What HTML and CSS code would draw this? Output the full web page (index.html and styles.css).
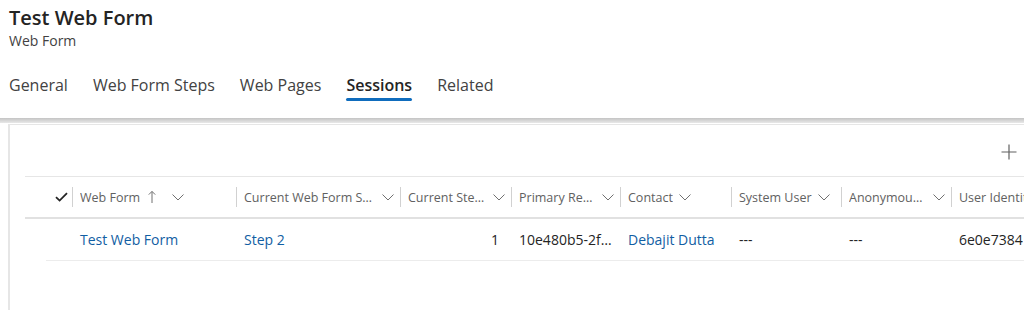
FILE: index.html
```html
<!DOCTYPE html>
<html lang="en">
<head>
    <meta charset="UTF-8">
    <meta name="viewport" content="width=device-width, initial-scale=1.0">
    <title>Test Web Form</title>
    <link rel="stylesheet" href="styles.css">
</head>
<body>
    <div class="record-header">
        <h1 class="record-title">Test Web Form</h1>
        <div class="record-type">Web Form</div>
        <ul class="tabs">
            <li class="tab">General</li>
            <li class="tab">Web Form Steps</li>
            <li class="tab">Web Pages</li>
            <li class="tab active">Sessions</li>
            <li class="tab">Related</li>
        </ul>
    </div>
    <div class="divider-bar"></div>

    <div class="panel">
        <div class="toolbar">
            <button class="add-btn" title="New">
                <svg width="16" height="16" viewBox="0 0 16 16"><path d="M8 0.5v15M0.5 8h15" stroke="#616161" stroke-width="1.2" fill="none"/></svg>
            </button>
        </div>

        <div class="grid">
            <div class="grid-header">
                <div class="cell check-cell">
                    <svg width="13" height="10" viewBox="0 0 13 10"><path d="M1 5.2l3.6 3.4L12 1.2" stroke="#242424" stroke-width="1.8" fill="none"/></svg>
                </div>
                <div class="cell col-1">
                    <span class="head-text">Web Form</span>
                    <svg class="sort-icon" width="8" height="14" viewBox="0 0 8 14"><path d="M4 13V1.5M0.8 4.6L4 1.4l3.2 3.2" stroke="#707070" stroke-width="1" fill="none"/></svg>
                    <svg class="chevron wide" width="12" height="7" viewBox="0 0 12 7"><path d="M0.5 0.5L6 6l5.5-5.5" stroke="#707070" stroke-width="1" fill="none"/></svg>
                </div>
                <div class="cell col-2">
                    <span class="head-text">Current Web Form Step</span>
                    <svg class="chevron" width="12" height="7" viewBox="0 0 12 7"><path d="M0.5 0.5L6 6l5.5-5.5" stroke="#707070" stroke-width="1" fill="none"/></svg>
                </div>
                <div class="cell col-3">
                    <span class="head-text">Current Step Index</span>
                    <svg class="chevron" width="12" height="7" viewBox="0 0 12 7"><path d="M0.5 0.5L6 6l5.5-5.5" stroke="#707070" stroke-width="1" fill="none"/></svg>
                </div>
                <div class="cell col-4">
                    <span class="head-text">Primary Record ID</span>
                    <svg class="chevron" width="12" height="7" viewBox="0 0 12 7"><path d="M0.5 0.5L6 6l5.5-5.5" stroke="#707070" stroke-width="1" fill="none"/></svg>
                </div>
                <div class="cell col-5">
                    <span class="head-text">Contact</span>
                    <svg class="chevron" width="12" height="7" viewBox="0 0 12 7"><path d="M0.5 0.5L6 6l5.5-5.5" stroke="#707070" stroke-width="1" fill="none"/></svg>
                </div>
                <div class="cell col-6">
                    <span class="head-text">System User</span>
                    <svg class="chevron" width="12" height="7" viewBox="0 0 12 7"><path d="M0.5 0.5L6 6l5.5-5.5" stroke="#707070" stroke-width="1" fill="none"/></svg>
                </div>
                <div class="cell col-7">
                    <span class="head-text">Anonymous Identification</span>
                    <svg class="chevron" width="12" height="7" viewBox="0 0 12 7"><path d="M0.5 0.5L6 6l5.5-5.5" stroke="#707070" stroke-width="1" fill="none"/></svg>
                </div>
                <div class="cell col-8">
                    <span class="head-text clip">User Identity Name</span>
                </div>
            </div>

            <div class="grid-row">
                <div class="cell check-cell"></div>
                <div class="cell col-1"><a class="link">Test Web Form</a></div>
                <div class="cell col-2"><a class="link">Step 2</a></div>
                <div class="cell col-3 num">1</div>
                <div class="cell col-4"><span class="ellipsis">10e480b5-2f1c-ee11-8f6d-000d3a5c1b2e</span></div>
                <div class="cell col-5"><a class="link">Debajit Dutta</a></div>
                <div class="cell col-6">---</div>
                <div class="cell col-7">---</div>
                <div class="cell col-8"><span class="clip">6e0e7384</span></div>
            </div>
        </div>
    </div>
</body>
</html>
```

FILE: styles.css
```css
body {
    margin: 0;
    font-family: "Segoe UI", "Open Sans", sans-serif;
    background-color: #fff;
    color: #242424;
    overflow: hidden;
    height: 310px;
}

.record-header {
    padding: 4px 0 0 9px;
}

.record-title {
    margin: 0;
    font-size: 20px;
    font-weight: 600;
    line-height: 28px;
    color: #242424;
}

.record-type {
    font-size: 14px;
    line-height: 18px;
    color: #424242;
}

.tabs {
    list-style: none;
    margin: 20px 0 0;
    padding: 0;
    display: flex;
    gap: 25px;
}

.tab {
    position: relative;
    font-size: 16px;
    line-height: 22px;
    padding: 4px 0 22px;
    color: #424242;
}

.tab.active {
    font-weight: 600;
    color: #242424;
}

.tab.active::after {
    content: "";
    position: absolute;
    left: 0;
    right: 0;
    bottom: 17px;
    height: 3px;
    border-radius: 2px;
    background-color: #0f6cbd;
}

.divider-bar {
    height: 5px;
    background: linear-gradient(#c4c4c4, #e8e8e8);
}

.panel {
    margin: 1px 0 0 8px;
    border-left: 2px solid #e6e6e6;
    border-top: 1px solid #e6e6e6;
    height: 200px;
    padding-left: 15px;
}

.toolbar {
    display: flex;
    justify-content: flex-end;
    height: 51px;
}

.add-btn {
    background: none;
    border: none;
    padding: 0;
    margin: 19px 7px 0 0;
    width: 16px;
    height: 16px;
    display: flex;
}

.grid {
    font-size: 14px;
}

.grid-header {
    display: flex;
    height: 40px;
    border-top: 1px solid #e6e6e6;
    border-bottom: 2px solid #e1e1e1;
    color: #616161;
    font-size: 12.5px;
}

.grid-row {
    display: flex;
    height: 41px;
    margin-left: 21px;
    border-bottom: 1px solid #ececec;
    color: #242424;
}

.cell {
    display: flex;
    align-items: center;
    padding: 0 8px;
    box-sizing: border-box;
    flex-shrink: 0;
    min-width: 0;
    white-space: nowrap;
    overflow: hidden;
}

.grid-header .cell {
    padding-right: 6px;
}

.grid-header .cell + .cell {
    position: relative;
}

.grid-header .cell + .cell::before {
    content: "";
    position: absolute;
    left: 0;
    top: 10px;
    bottom: 10px;
    width: 1px;
    background-color: #d1d1d1;
}

.grid-header .check-cell { width: 47px; justify-content: flex-end; padding-right: 4px; }
.grid-row .check-cell { width: 26px; }
.col-1 { width: 164px; }
.col-2 { width: 164px; }
.col-3 { width: 111px; }
.col-4 { width: 109px; }
.col-5 { width: 111px; }
.col-6 { width: 110px; }
.col-7 { width: 110px; }
.col-8 { width: 120px; }

.head-text {
    overflow: hidden;
    text-overflow: ellipsis;
    min-width: 0;
}

.head-text.clip,
.clip {
    overflow: hidden;
    text-overflow: clip;
}

.ellipsis {
    overflow: hidden;
    text-overflow: ellipsis;
    min-width: 0;
}

.sort-icon {
    flex-shrink: 0;
    margin-left: 8px;
}

.chevron {
    flex-shrink: 0;
    margin-left: 6px;
}

.chevron.wide {
    margin-left: 16px;
}

.num {
    justify-content: flex-end;
    padding-right: 12px;
}

.link {
    color: #115ea3;
    text-decoration: none;
    cursor: pointer;
}
```
